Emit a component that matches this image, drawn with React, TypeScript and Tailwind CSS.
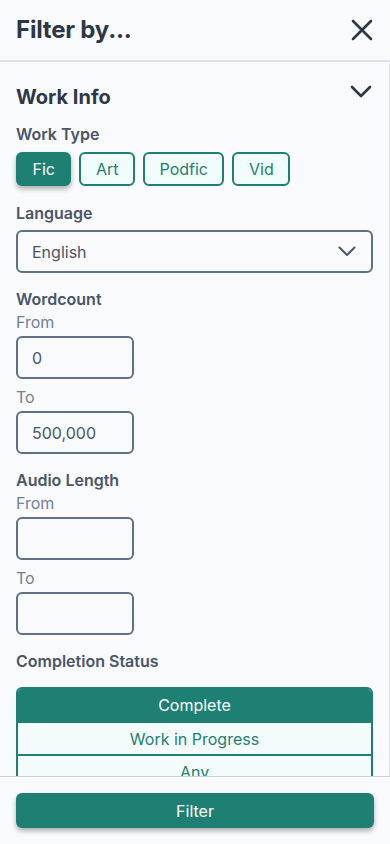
import React from "react";

function Label({ children }: { children: React.ReactNode }) {
  return <div className="text-base leading-6 font-semibold text-[#4a5568]">{children}</div>;
}
function Sub({ children }: { children: React.ReactNode }) {
  return <div className="text-base leading-[22px] text-[#718096]">{children}</div>;
}
function Box({ value }: { value?: string }) {
  return (
    <div className="mt-[3px] h-[43px] w-[118px] rounded-md border-2 border-[#5f6f86] px-[14px] flex items-center text-base text-[#4a5568]">
      {value}
    </div>
  );
}

export default function App() {
  const types = ["Fic", "Art", "Podfic", "Vid"];
  return (
    <div
      className="h-[844px] w-[390px] flex flex-col bg-[#f8fafc] overflow-hidden"
      style={{ fontFamily: "Inter, 'Noto Sans', sans-serif" }}
    >
      <div className="h-[60px] shrink-0 px-4 flex items-center justify-between">
        <div className="text-2xl font-bold text-[#2d3748] tracking-[-0.2px]">Filter by...</div>
        <svg width="22" height="22" viewBox="0 0 22 22" className="mr-[1px]">
          <path d="M2 2 L20 20 M20 2 L2 20" stroke="#2d3748" strokeWidth="2.6" strokeLinecap="round" fill="none" />
        </svg>
      </div>
      <div className="flex-1 min-h-0 overflow-hidden border-t-2 border-r border-[#dde2e8] border-r-[#e2e6eb]">
        <div className="px-4 pt-[21px]">
          <div className="flex items-start justify-between">
            <div className="text-xl leading-7 font-bold text-[#2d3748]">Work Info</div>
            <svg width="22" height="13" viewBox="0 0 22 13" className="mt-[2px] mr-[1px]">
              <path d="M2 2 L11 11 L20 2" stroke="#2d3748" strokeWidth="2.6" strokeLinecap="round" strokeLinejoin="round" fill="none" />
            </svg>
          </div>
          <div className="mt-[11px]">
            <Label>Work Type</Label>
          </div>
          <div className="mt-1.5 flex gap-2">
            {types.map((t, i) => (
              <div
                key={t}
                className={
                  i === 0
                    ? "h-[34px] px-[14.5px] rounded-md border-2 border-[#1e7f73] bg-[#1e7f73] text-white text-base flex items-center shadow-[0_3px_5px_rgba(0,0,0,0.3)]"
                    : "h-[34px] px-[14.5px] rounded-md border-2 border-[#1e7f73] bg-[#f0fdfa] text-[#1e7f73] text-base flex items-center"
                }
              >
                {t}
              </div>
            ))}
          </div>
          <div className="mt-[15px]">
            <Label>Language</Label>
          </div>
          <div className="mt-[5px] h-[43px] rounded-md border-2 border-[#5f6f86] px-[14px] flex items-center justify-between text-base text-[#4a5568]">
            <span>English</span>
            <svg width="18" height="11" viewBox="0 0 18 11" className="mr-[1px]">
              <path d="M1.5 1.5 L9 9 L16.5 1.5" stroke="#4a5568" strokeWidth="2" strokeLinecap="round" strokeLinejoin="round" fill="none" />
            </svg>
          </div>
          <div className="mt-[14px]">
            <Label>Wordcount</Label>
          </div>
          <Sub>From</Sub>
          <Box value="0" />
          <div className="mt-[7px]">
            <Sub>To</Sub>
          </div>
          <Box value="500,000" />
          <div className="mt-[14px]">
            <Label>Audio Length</Label>
          </div>
          <Sub>From</Sub>
          <Box />
          <div className="mt-[7px]">
            <Sub>To</Sub>
          </div>
          <Box />
          <div className="mt-[14px]">
            <Label>Completion Status</Label>
          </div>
          <div className="mt-[14px] rounded-t-md border-2 border-[#1e7f73] overflow-hidden text-base">
            <div className="h-[32px] bg-[#1e7f73] text-white flex items-center justify-center">Complete</div>
            <div className="h-[33px] border-t-2 border-[#1e7f73] bg-[#f3fcfb] text-[#1e7f73] flex items-center justify-center">Work in Progress</div>
            <div className="h-[33px] border-t-2 border-[#1e7f73] bg-[#f3fcfb] text-[#1e7f73] flex items-center justify-center">Any</div>
          </div>
        </div>
      </div>
      <div className="h-[68px] shrink-0 border-t border-[#c7ced8] px-4 pt-4">
        <div className="h-[35px] rounded-md bg-[#1e7f73] text-white text-base flex items-center justify-center shadow-[0_3px_5px_rgba(0,0,0,0.3)]">
          Filter
        </div>
      </div>
    </div>
  );
}
